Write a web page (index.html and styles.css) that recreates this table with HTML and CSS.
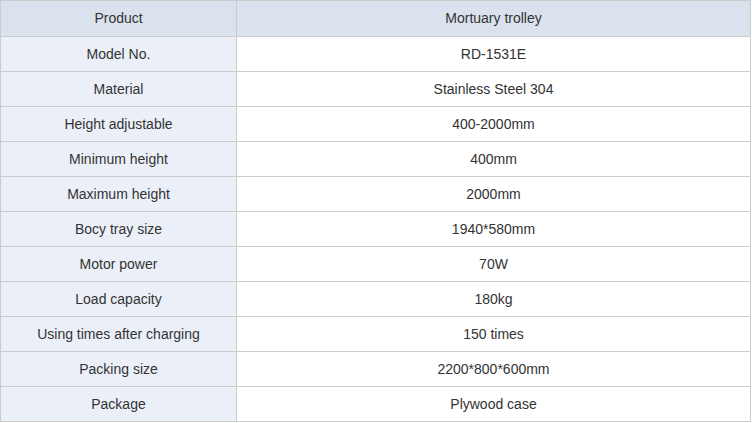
FILE: index.html
```html
<!DOCTYPE html>
<html>
<head>
<meta charset="utf-8">
<link rel="stylesheet" href="styles.css">
</head>
<body>
<table class="spec">
  <tr class="head"><td class="key">Product</td><td class="val">Mortuary trolley</td></tr>
  <tr><td class="key">Model No.</td><td class="val">RD-1531E</td></tr>
  <tr><td class="key">Material</td><td class="val">Stainless Steel 304</td></tr>
  <tr><td class="key">Height adjustable</td><td class="val">400-2000mm</td></tr>
  <tr><td class="key">Minimum height</td><td class="val">400mm</td></tr>
  <tr><td class="key">Maximum height</td><td class="val">2000mm</td></tr>
  <tr><td class="key">Bocy tray size</td><td class="val">1940*580mm</td></tr>
  <tr><td class="key">Motor power</td><td class="val">70W</td></tr>
  <tr><td class="key">Load capacity</td><td class="val">180kg</td></tr>
  <tr><td class="key">Using times after charging</td><td class="val">150 times</td></tr>
  <tr><td class="key">Packing size</td><td class="val">2200*800*600mm</td></tr>
  <tr><td class="key">Package</td><td class="val">Plywood case</td></tr>
</table>
</body>
</html>
```
FILE: styles.css
```css
html, body {
  margin: 0;
  padding: 0;
  background: #ffffff;
}
.spec {
  border-collapse: collapse;
  width: 751px;
  font-family: "Liberation Sans", Arial, sans-serif;
  font-size: 14px;
  color: #333333;
  table-layout: fixed;
}
.spec td {
  border: 1px solid #cccccc;
  height: 33px;
  padding: 0 0 1px 0;
  text-align: center;
  vertical-align: middle;
}
.spec .key {
  width: 235px;
  background: #ebf0f8;
}
.spec .val {
  background: #ffffff;
}
.spec .head td {
  height: 34px;
  background: #dae2ed;
}
```
